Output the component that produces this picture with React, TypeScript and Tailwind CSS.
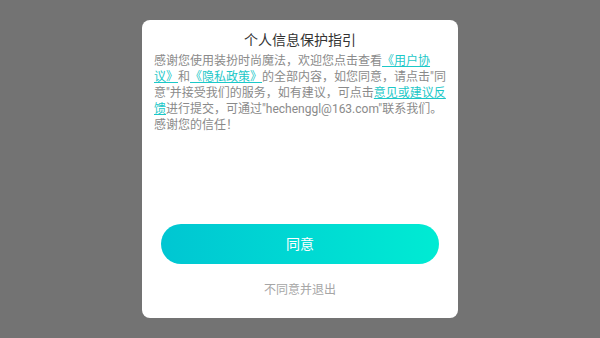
import React from "react";

export default function App() {
  return (
    <div
      className="h-[338px] w-full bg-[#737373] flex items-center justify-center"
      style={{ fontFamily: "Roboto, 'Noto Sans CJK SC', sans-serif" }}
    >
      <div className="w-[316px] h-[298px] bg-white rounded-[8px] flex flex-col px-3 pt-[10px] pb-[20px]">
        <h1 className="text-center text-[14px] leading-[20px] text-[#333333]">个人信息保护指引</h1>
        <p className="mt-[3px] text-[12px] leading-[16px] text-[#8a8a8a] flex-1">
          感谢您使用装扮时尚魔法，欢迎您点击查看<span className="text-[#1cc8c8] underline">《用户协议》</span>和<span className="text-[#1cc8c8] underline">《隐私政策》</span>的全部内容，如您同意，请点击"同意"并接受我们的服务，如有建议，可点击<span className="text-[#1cc8c8] underline">意见或建议反馈</span>进行提交，可通过"hechenggl@163.com"联系我们。感谢您的信任！
        </p>
        <button className="mx-auto w-[278px] h-[40px] rounded-full bg-gradient-to-r from-[#00c6d2] to-[#00ebd3] text-white text-[14px]">
          同意
        </button>
        <div className="mt-[18px] text-center text-[12px] leading-[16px] text-[#a6a6a6]">不同意并退出</div>
      </div>
    </div>
  );
}
